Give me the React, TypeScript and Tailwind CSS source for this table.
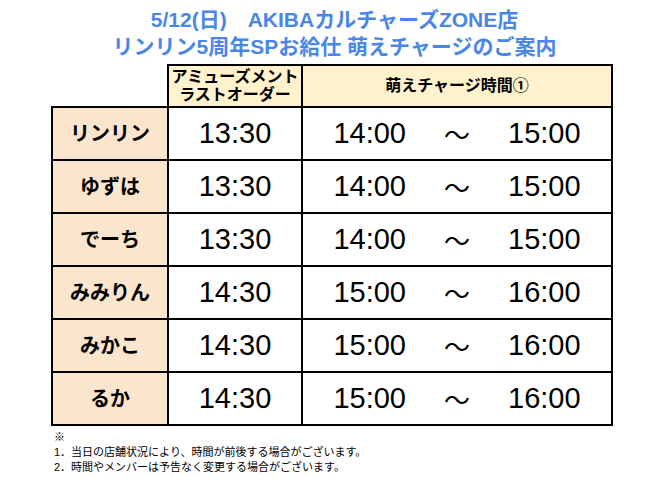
const rows = [
  { name: "リンリン", last: "13:30", from: "14:00", to: "15:00" },
  { name: "ゆずは", last: "13:30", from: "14:00", to: "15:00" },
  { name: "でーち", last: "13:30", from: "14:00", to: "15:00" },
  { name: "みみりん", last: "14:30", from: "15:00", to: "16:00" },
  { name: "みかこ", last: "14:30", from: "15:00", to: "16:00" },
  { name: "るか", last: "14:30", from: "15:00", to: "16:00" },
];

const jp = "font-['Liberation_Sans','Noto_Sans_CJK_JP',sans-serif]";

export default function App() {
  return (
    <div className={`w-[669px] h-[496px] bg-white text-black ${jp}`}>
      {/* Title */}
      <div className="pt-[6px] text-center text-[21px] leading-[27px] font-bold text-[#4a86e8]">
        <div>5/12(日)　AKIBAカルチャーズZONE店</div>
        <div>リンリン5周年SPお給仕 萌えチャージのご案内</div>
      </div>

      {/* Schedule table */}
      <table className="mt-[4px] ml-[51px] w-[560px] table-fixed border-collapse">
        <colgroup>
          <col className="w-[116px]" />
          <col className="w-[134px]" />
          <col className="w-[310px]" />
        </colgroup>
        <thead>
          <tr className="h-[42px]">
            <th className="p-0"></th>
            <th className="p-0 border-2 border-black bg-[#fff2cc] text-[16px] leading-[18px] font-bold">
              アミューズメント
              <br />
              ラストオーダー
            </th>
            <th className="p-0 border-2 border-black bg-[#fff2cc] text-[16px] font-bold">萌えチャージ時間①</th>
          </tr>
        </thead>
        <tbody>
          {rows.map((r) => (
            <tr key={r.name} className="h-[53px]">
              <td className="p-0 border-2 border-black bg-[#fce5cd] text-center text-[20px] font-bold">{r.name}</td>
              <td className="p-0 border-2 border-black text-center text-[29px] font-['Liberation_Sans',sans-serif]">
                {r.last}
              </td>
              <td className="p-0 border-2 border-black">
                <div className="flex items-center justify-center gap-[38px] text-[29px]">
                  <span className="font-['Liberation_Sans',sans-serif]">{r.from}</span>
                  <span className="font-['Noto_Sans_CJK_JP',sans-serif] text-[26px]">～</span>
                  <span className="font-['Liberation_Sans',sans-serif]">{r.to}</span>
                </div>
              </td>
            </tr>
          ))}
        </tbody>
      </table>

      {/* Notes */}
      <div className="mt-[4px] ml-[54px] text-[11px] leading-[15px] text-black">
        <div>※</div>
        <div>1．当日の店舗状況により、時間が前後する場合がございます。</div>
        <div>2．時間やメンバーは予告なく変更する場合がございます。</div>
      </div>
    </div>
  );
}
